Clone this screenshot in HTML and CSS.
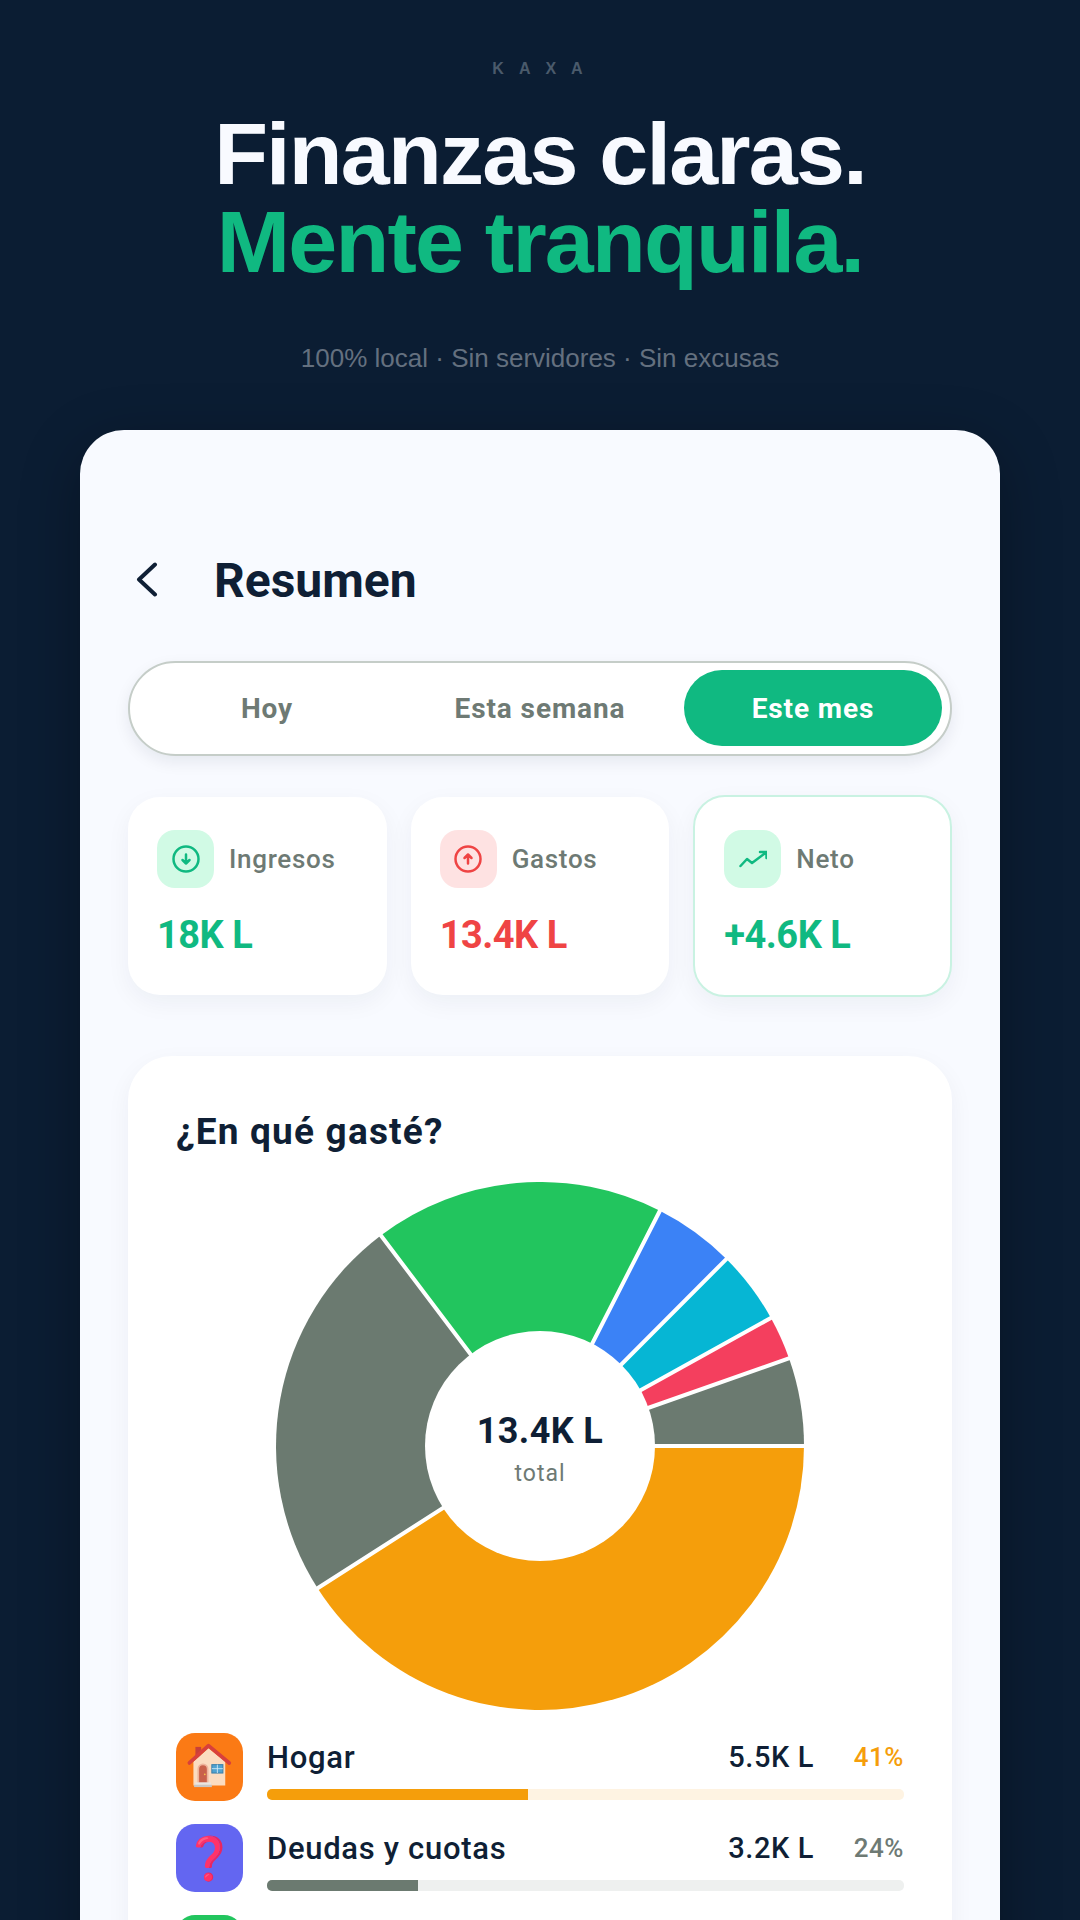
FILE: index.html
```html
<!DOCTYPE html>
<html lang="es">
<head>
  <meta charset="utf-8">
  <title>Kaxa - Resumen</title>
  <link rel="stylesheet" href="styles.css">
</head>
<body>
  <header class="hero">
    <p class="brand">KAXA</p>
    <h1 class="headline">Finanzas claras.<br><span class="accent">Mente tranquila.</span></h1>
    <p class="tagline">100% local · Sin servidores · Sin excusas</p>
  </header>

  <main class="phone">
    <div class="topbar">
      <svg class="back" viewBox="0 0 24 36" width="24" height="36"><path d="M20 2.500 L4 17.500 L20 32.500" /></svg>
      <h2 class="title">Resumen</h2>
    </div>

    <div class="tabs">
      <div class="tab">Hoy</div>
      <div class="tab">Esta semana</div>
      <div class="tab active">Este mes</div>
    </div>

    <div class="stats">
      <div class="stat">
        <div class="stat-head">
          <span class="stat-icon green">
            <svg viewBox="0 0 28 28" width="28" height="28"><circle cx="14" cy="14" r="12.500"/><path d="M14 9.500v9M10.500 15 14 18.500 17.500 15"/></svg>
          </span>
          <span class="stat-label">Ingresos</span>
        </div>
        <div class="stat-value income">18K L</div>
      </div>
      <div class="stat">
        <div class="stat-head">
          <span class="stat-icon red">
            <svg viewBox="0 0 28 28" width="28" height="28"><circle cx="14" cy="14" r="12.500"/><path d="M14 18.500v-9M10.500 13 14 9.500 17.500 13"/></svg>
          </span>
          <span class="stat-label">Gastos</span>
        </div>
        <div class="stat-value expense">13.4K L</div>
      </div>
      <div class="stat net">
        <div class="stat-head">
          <span class="stat-icon green">
            <svg viewBox="0 0 28 28" width="28" height="28"><path d="M1.500 21 8 14l5 4L27 7.500M21 7h6.500v6"/></svg>
          </span>
          <span class="stat-label">Neto</span>
        </div>
        <div class="stat-value income">+4.6K L</div>
      </div>
    </div>

    <section class="panel">
      <h3 class="panel-title">¿En qué gasté?</h3>

      <div class="donut">
        <svg viewBox="-264 -264 528 528" width="528" height="528">
          <path fill="#f59e0b" d="M0 0L264 0A264 264 0 0 1 -222.400 142.200Z"/>
          <path fill="#6b7a70" d="M0 0L-222.400 142.200A264 264 0 0 1 -159.200 -210.600Z"/>
          <path fill="#22c55e" d="M0 0L-159.200 -210.600A264 264 0 0 1 119.900 -235.200Z"/>
          <path fill="#3b82f6" d="M0 0L119.900 -235.200A264 264 0 0 1 186.400 -187Z"/>
          <path fill="#06b6d4" d="M0 0L186.400 -187A264 264 0 0 1 230.900 -128Z"/>
          <path fill="#f43f5e" d="M0 0L230.900 -128A264 264 0 0 1 249 -87.700Z"/>
          <path fill="#6b7a70" d="M0 0L249 -87.700A264 264 0 0 1 264 0Z"/>
          <g class="cuts">
            <path d="M0 0L266 0M0 0L-224 143.200M0 0L-160.400 -212.200M0 0L120.800 -237M0 0L187.800 -188.400M0 0L232.600 -129M0 0L250.900 -88.400"/>
          </g>
          <circle r="115" fill="#fff"/>
        </svg>
        <div class="donut-center">
          <div class="donut-total">13.4K L</div>
          <div class="donut-label">total</div>
        </div>
      </div>

      <ul class="cats">
        <li class="cat">
          <span class="cat-icon orange">
            <!-- house emoji, redrawn so the colours match -->
            <svg viewBox="0 0 200 200" width="67" height="68">
              <rect x="58" y="40" width="17" height="32" fill="#c8403a"/>
              <path d="M52 84 97 44l50 40v71H52Z" fill="#fbdcc0"/>
              <path d="M40 88 97 36l62 52" fill="none" stroke="#d8403c" stroke-width="11" stroke-linejoin="round" stroke-linecap="round"/>
              <path d="M64 148v-42a16 16 0 0 1 33 0v42Z" fill="#eeb49c"/>
              <path d="M69 146v-40a11.500 11.500 0 0 1 23 0v40Z" fill="#c9614a"/>
              <circle cx="86" cy="122" r="2.500" fill="#f7c948"/>
              <rect x="107" y="93" width="33" height="25" fill="#4fa3d1" stroke="#3a7ea8" stroke-width="3"/>
              <path d="M123.500 93v25M107 105h33" stroke="#d9eef8" stroke-width="2.500"/>
              <rect x="58" y="146" width="46" height="7" fill="#e9e6e2"/>
              <rect x="54" y="153" width="53" height="7" fill="#c9c6c4"/>
            </svg>
          </span>
          <div class="cat-body">
            <div class="cat-row">
              <span class="cat-name">Hogar</span>
              <span class="cat-amount">5.5K L</span>
              <span class="cat-pct amber">41%</span>
            </div>
            <div class="track amber-track"><div class="fill amber-fill" style="width:41%"></div></div>
          </div>
        </li>
        <li class="cat">
          <span class="cat-icon indigo"><span class="pinker">❓</span></span>
          <div class="cat-body">
            <div class="cat-row">
              <span class="cat-name">Deudas y cuotas</span>
              <span class="cat-amount">3.2K L</span>
              <span class="cat-pct slate">24%</span>
            </div>
            <div class="track slate-track"><div class="fill slate-fill" style="width:23.700%"></div></div>
          </div>
        </li>
        <li class="cat">
          <span class="cat-icon lime"></span>
        </li>
      </ul>
    </section>
  </main>
</body>
</html>
```

FILE: styles.css
```css
* { box-sizing: border-box; }
html, body { margin: 0; padding: 0; }
body {
  width: 1080px;
  height: 1920px;
  overflow: hidden;
  background-color: #0b1d33;
  font-family: 'Liberation Sans', Arial, sans-serif;
}

/* --- Hero --- */
.hero { text-align: center; padding-top: 59px; }
.brand {
  margin: 0;
  padding-left: 10px;
  font-size: 16px;
  line-height: 20px;
  font-weight: 700;
  letter-spacing: 15px;
  color: #4a5a6b;
}
.headline {
  margin: 31px 0 0;
  font-size: 88px;
  line-height: 88px;
  font-weight: 700;
  letter-spacing: -0.02em;
  color: #f8faff;
}
.accent { color: #10b981; }
.tagline {
  margin: 56px 0 0;
  font-size: 26px;
  line-height: 32px;
  color: #64707f;
}

/* --- Phone card --- */
.phone {
  margin: 56px 80px 0;
  height: 1600px;
  padding: 120px 48px 0;
  background-color: #f8faff;
  border-radius: 44px 44px 0 0;
  box-shadow: 0 16px 60px rgba(0, 0, 0, 0.3);
  font-family: Roboto, sans-serif;
}
.topbar { display: flex; align-items: center; height: 60px; }
.back { margin-left: 7px; fill: none; stroke: #0f1f35; stroke-width: 4; stroke-linecap: round; stroke-linejoin: round; }
.title {
  margin: 0 0 0 55px;
  font-size: 48px;
  font-weight: 700;
  color: #0f1f35;
}

/* --- Period tabs --- */
.tabs {
  display: flex;
  gap: 15px;
  margin-top: 51px;
  height: 95px;
  padding: 7px 8px 8px;
  background-color: #fff;
  border: 2px solid #c5cdc8;
  border-radius: 48px;
  box-shadow: 0 6px 16px rgba(15, 31, 53, 0.08);
}
.tab {
  flex: 1;
  display: flex;
  align-items: center;
  justify-content: center;
  font-size: 28px;
  font-weight: 700;
  letter-spacing: 0.9px;
  color: #6e7a74;
  border-radius: 39px;
}
.tab.active { background-color: #10b981; color: #fff; }

/* --- Stat cards --- */
.stats { display: grid; grid-template-columns: repeat(3, 1fr); align-items: center; gap: 24px; margin-top: 39px; }
.stat {
  height: 198px;
  padding: 33px 29px 0;
  background-color: #fff;
  border-radius: 32px;
  box-shadow: 0 8px 24px rgba(15, 31, 53, 0.05);
}
.stat.net { height: 202px; border: 2px solid #c9f2e2; padding: 33px 29px 0; }
.stat-head { display: flex; align-items: center; gap: 15px; }
.stat-icon {
  width: 57px;
  height: 58px;
  display: flex;
  align-items: center;
  justify-content: center;
  border-radius: 18px;
}
.stat-icon svg { fill: none; stroke-width: 2.500; stroke-linecap: round; stroke-linejoin: round; }
.stat-icon.green { background-color: #d1fae5; }
.stat-icon.green svg { stroke: #10b981; }
.stat-icon.red { background-color: #fee2e2; }
.stat-icon.red svg { stroke: #ef4444; }
.stat-label { font-size: 26px; font-weight: 500; letter-spacing: 0.7px; color: #6e7a74; }
.stat-value { margin-top: 24px; font-size: 38px; line-height: 46px; font-weight: 700; letter-spacing: -0.5px; }
.income { color: #10b981; }
.expense { color: #ef4444; }

/* --- Chart panel --- */
.panel {
  margin-top: 59px;
  padding: 55px 48px 0;
  height: 1000px;
  background-color: #fff;
  border-radius: 44px;
  box-shadow: 0 8px 24px rgba(15, 31, 53, 0.05);
}
.panel-title { margin: 0; font-size: 37px; line-height: 42px; font-weight: 700; letter-spacing: 1.2px; color: #0f1f35; }
.donut { position: relative; width: 528px; height: 528px; margin: 29px auto 0; }
.donut svg { display: block; }
.cuts { stroke: #fff; stroke-width: 4; fill: none; }
.donut-center {
  position: absolute;
  left: 0;
  right: 0;
  top: 227px;
  text-align: center;
}
.donut-total { font-size: 36px; line-height: 44px; font-weight: 700; letter-spacing: 0.4px; color: #0f1f35; }
.donut-label { margin-top: 6px; font-size: 23px; line-height: 30px; letter-spacing: 1px; color: #6e7a74; }

/* --- Category list --- */
.cats { list-style: none; margin: 23px 0 0; padding: 0; }
.cat { display: flex; gap: 24px; height: 91px; }
.cat-icon {
  flex: none;
  width: 67px;
  height: 68px;
  display: flex;
  align-items: center;
  justify-content: center;
  border-radius: 19px;
  font-size: 42px;
  font-family: 'Noto Color Emoji', sans-serif;
}
.pinker { filter: hue-rotate(-20deg) saturate(1.2); }
.orange { background-color: #fb7a15; }
.indigo { background-color: #6366f1; }
.lime { background-color: #22c55e; }
.cat-body { flex: 1; }
.cat-row { display: flex; align-items: center; height: 48px; }
.cat-name { flex: 1; font-size: 31px; font-weight: 500; letter-spacing: 0.7px; color: #0f1f35; }
.cat-amount { font-size: 29px; font-weight: 500; letter-spacing: 0.6px; color: #0f1f35; }
.cat-pct { width: 90px; text-align: right; font-size: 26px; font-weight: 500; letter-spacing: 0.5px; }
.amber { color: #f59e0b; }
.slate { color: #6e7a74; }
.track { height: 11px; margin-top: 8px; border-radius: 5px; overflow: hidden; }
.fill { height: 100%; }
.amber-track { background-color: #fef3e2; }
.amber-fill { background-color: #f59e0b; }
.slate-track { background-color: #eef0ef; }
.slate-fill { background-color: #6b7a70; }
```
